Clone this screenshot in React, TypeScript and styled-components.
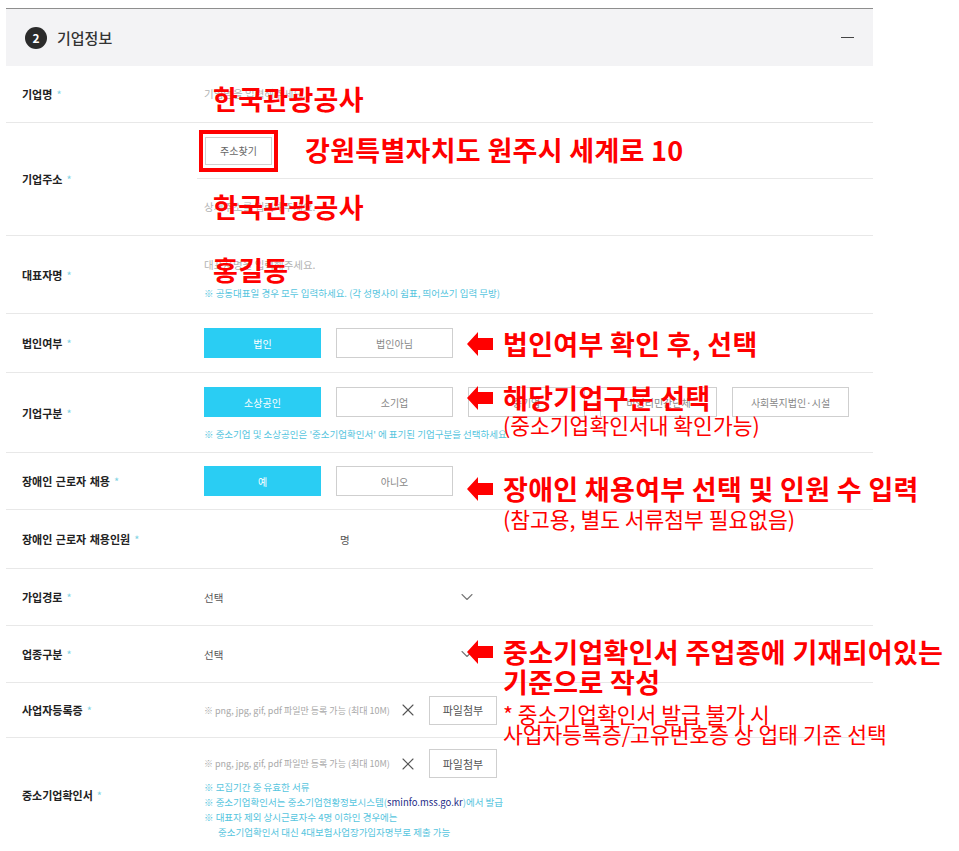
import styled, { createGlobalStyle } from 'styled-components'
import { ChevronDown, X } from 'lucide-react'

const GlobalStyle = createGlobalStyle`
  * { box-sizing: border-box; }
  body {
    margin: 0;
    background: #fff;
    font-family: 'Noto Sans CJK KR', 'Noto Sans', sans-serif;
  }
`

const Arrow = () => (
  <svg width='26' height='24' viewBox='0 0 26 24'>
    <polygon points='0,12 11,0 11,6 26,6 26,18 11,18 11,24' fill='#ff0000' />
  </svg>
)

export default function App() {
  return (
    <>
      <GlobalStyle />
      <Panel>
        <Header>
          <HeaderTitle>
            <Badge>2</Badge>
            <Title>기업정보</Title>
          </HeaderTitle>
          <Minus />
        </Header>

        <Row $h={57}>
          <Label>
            기업명<Req>*</Req>
          </Label>
          <Value>
            <Placeholder>기업명을 입력해주세요.</Placeholder>
          </Value>
          <Note $x={207} $y={18}>
            <Lines>
              <Big>한국관광공사</Big>
            </Lines>
          </Note>
        </Row>

        <Row $h={113}>
          <Label>
            기업주소<Req>*</Req>
          </Label>
          <AddrValue>
            <AddrSub $line>
              <RedFrame>
                <SmallBtn>주소찾기</SmallBtn>
              </RedFrame>
            </AddrSub>
            <AddrSub>
              <Placeholder>상세주소를 입력해주세요.</Placeholder>
            </AddrSub>
          </AddrValue>
          <Note $x={299} $y={12}>
            <Lines>
              <Big>강원특별자치도 원주시 세계로 10</Big>
            </Lines>
          </Note>
          <Note $x={207} $y={69}>
            <Lines>
              <Big>한국관광공사</Big>
            </Lines>
          </Note>
        </Row>

        <Row $h={78}>
          <Label>
            대표자명<Req>*</Req>
          </Label>
          <Value $pt={21} $gap={13}>
            <Placeholder>대표자명을 입력해주세요.</Placeholder>
            <Help>※ 공동대표일 경우 모두 입력하세요. (각 성명사이 쉼표, 띄어쓰기 입력 무방)</Help>
          </Value>
          <Note $x={207} $y={19}>
            <Lines>
              <Big>홍길동</Big>
            </Lines>
          </Note>
        </Row>

        <Row $h={59}>
          <Label>
            법인여부<Req>*</Req>
          </Label>
          <Value>
            <Choices>
              <Choice $on>법인</Choice>
              <Choice>법인아님</Choice>
            </Choices>
          </Value>
          <Note $x={461} $y={15}>
            <Arrow />
            <Lines>
              <Big>법인여부 확인 후, 선택</Big>
            </Lines>
          </Note>
        </Row>

        <Row $h={80}>
          <Label>
            기업구분<Req>*</Req>
          </Label>
          <Value $pt={14} $gap={10}>
            <Choices>
              <Choice $on>소상공인</Choice>
              <Choice>소기업</Choice>
              <Choice>중기업</Choice>
              <Choice>비영리민간단체</Choice>
              <Choice>사회복지법인·시설</Choice>
            </Choices>
            <Help>※ 중소기업 및 소상공인은 '중소기업확인서' 에 표기된 기업구분을 선택하세요.</Help>
          </Value>
          <Note $x={461} $y={10}>
            <Arrow />
            <Lines>
              <Big>해당기업구분 선택</Big>
              <Small>(중소기업확인서내 확인가능)</Small>
            </Lines>
          </Note>
        </Row>

        <Row $h={57}>
          <Label>
            장애인 근로자 채용<Req>*</Req>
          </Label>
          <Value>
            <Choices>
              <Choice $on>예</Choice>
              <Choice>아니오</Choice>
            </Choices>
          </Value>
          <Note $x={461} $y={21}>
            <Arrow />
            <Lines>
              <Big>장애인 채용여부 선택 및 인원 수 입력</Big>
              <Small $mt={3}>(참고용, 별도 서류첨부 필요없음)</Small>
            </Lines>
          </Note>
        </Row>

        <Row $h={59}>
          <Label>
            장애인 근로자 채용인원<Req>*</Req>
          </Label>
          <Value $row>
            <CountBox />
            <Unit>명</Unit>
          </Value>
        </Row>

        <Row $h={57}>
          <Label>
            가입경로<Req>*</Req>
          </Label>
          <Value>
            <Select>
              <span>선택</span>
              <ChevronDown size={20} strokeWidth={1.3} color='#777' />
            </Select>
          </Value>
        </Row>

        <Row $h={57}>
          <Label>
            업종구분<Req>*</Req>
          </Label>
          <Value>
            <Select>
              <span>선택</span>
              <ChevronDown size={20} strokeWidth={1.3} color='#777' />
            </Select>
          </Value>
          <Note $x={461} $y={11}>
            <Arrow />
            <Lines>
              <Big>중소기업확인서 주업종에 기재되어있는</Big>
              <Big>기준으로 작성</Big>
              <Small $mt={7} $lh={20}>
                * 중소기업확인서 발급 불가 시
              </Small>
              <Small $lh={20}>사업자등록증/고유번호증 상 업태 기준 선택</Small>
            </Lines>
          </Note>
        </Row>

        <Row $h={55}>
          <Label>
            사업자등록증<Req>*</Req>
          </Label>
          <Value>
            <FileRow>
              <FileHint>※ png, jpg, gif, pdf 파일만 등록 가능 (최대 10M)</FileHint>
              <X size={20} strokeWidth={1.3} color='#555' />
              <AttachBtn>파일첨부</AttachBtn>
            </FileRow>
          </Value>
        </Row>

        <Row $h={114}>
          <Label>
            중소기업확인서<Req>*</Req>
          </Label>
          <Value $pt={11} $gap={2}>
            <FileRow>
              <FileHint>※ png, jpg, gif, pdf 파일만 등록 가능 (최대 10M)</FileHint>
              <X size={20} strokeWidth={1.3} color='#555' />
              <AttachBtn>파일첨부</AttachBtn>
            </FileRow>
            <HelpList>
              <Help>※ 모집기간 중 유효한 서류</Help>
              <Help>
                ※ 중소기업확인서는 중소기업현황정보시스템(<Link>sminfo.mss.go.kr</Link>)에서 발급
              </Help>
              <Help>※ 대표자 제외 상시근로자수 4명 이하인 경우에는</Help>
              <Help $indent>중소기업확인서 대신 4대보험사업장가입자명부로 제출 가능</Help>
            </HelpList>
          </Value>
        </Row>
      </Panel>
    </>
  )
}

const Panel = styled.div`
  width: 867px;
  margin: 8px 0 0 6px;
  border-top: 1px solid #8e8e8e;
`

const Header = styled.div`
  height: 57px;
  background: #f3f3f5;
  display: flex;
  align-items: center;
  justify-content: space-between;
  padding: 0 19px;
`

const HeaderTitle = styled.div`
  display: flex;
  align-items: center;
  gap: 10px;
`

const Badge = styled.span`
  width: 22px;
  height: 22px;
  border-radius: 50%;
  background: #2b2b2b;
  color: #fff;
  font-size: 12px;
  font-weight: 700;
  display: flex;
  align-items: center;
  justify-content: center;
`

const Title = styled.span`
  font-size: 15px;
  font-weight: 500;
  color: #333;
`

const Minus = styled.span`
  width: 13px;
  height: 1px;
  background: #444;
`

const Row = styled.div<{ $h: number }>`
  position: relative;
  display: grid;
  grid-template-columns: 191px 1fr;
  height: ${({ $h }) => $h}px;
  border-bottom: 1px solid #e8e8e8;
`

const Label = styled.div`
  display: flex;
  align-items: center;
  padding-left: 16px;
  font-size: 11px;
  font-weight: 700;
  color: #222;
  word-spacing: 1px;
`

const Req = styled.span`
  margin-left: 4px;
  color: #7fd3e3;
  font-weight: 400;
`

const Value = styled.div<{ $pt?: number; $gap?: number; $row?: boolean }>`
  display: flex;
  flex-direction: ${({ $row }) => ($row ? 'row' : 'column')};
  justify-content: ${({ $pt, $row }) => ($row ? 'flex-start' : $pt !== undefined ? 'flex-start' : 'center')};
  align-items: ${({ $row }) => ($row ? 'center' : 'flex-start')};
  padding-left: 7px;
  padding-top: ${({ $pt }) => $pt ?? 0}px;
  gap: ${({ $gap }) => $gap ?? 0}px;
`

const AddrValue = styled.div`
  display: flex;
  flex-direction: column;
`

const AddrSub = styled.div<{ $line?: boolean }>`
  height: 56px;
  display: flex;
  align-items: center;
  padding-left: 7px;
  border-bottom: ${({ $line }) => ($line ? '1px solid #e8e8e8' : 'none')};
`

const RedFrame = styled.div`
  display: inline-flex;
  margin-left: -5px;
  padding: 3px 2px;
  border: 4px solid #ff0000;
`

const SmallBtn = styled.div`
  width: 67px;
  height: 28px;
  border: 1px solid #d0d0d0;
  display: flex;
  align-items: center;
  justify-content: center;
  font-size: 10px;
  color: #666;
`

const Placeholder = styled.span`
  font-size: 10.5px;
  line-height: 16px;
  color: #b3b3b3;
`

const Help = styled.div<{ $indent?: boolean }>`
  font-size: 9.5px;
  line-height: 15px;
  color: #56c5de;
  padding-left: ${({ $indent }) => ($indent ? 14 : 0)}px;
  white-space: nowrap;
`

const HelpList = styled.div`
  display: flex;
  flex-direction: column;
`

const Link = styled.span`
  color: #1d2a86;
`

const Choices = styled.div`
  display: flex;
  gap: 15px;
`

const Choice = styled.div<{ $on?: boolean }>`
  width: 117px;
  height: 30px;
  display: flex;
  align-items: center;
  justify-content: center;
  font-size: 10px;
  border: 1px solid ${({ $on }) => ($on ? '#2acdf3' : '#cfcfcf')};
  background: ${({ $on }) => ($on ? '#2acdf3' : '#fff')};
  color: ${({ $on }) => ($on ? '#fff' : '#888')};
`

const CountBox = styled.div`
  width: 130px;
  height: 28px;
`

const Unit = styled.span`
  margin-left: 6px;
  font-size: 10.5px;
  color: #555;
`

const Select = styled.div`
  width: 273px;
  display: flex;
  align-items: center;
  justify-content: space-between;
  font-size: 10.5px;
  color: #555;
`

const FileRow = styled.div`
  display: flex;
  align-items: center;
`

const FileHint = styled.span`
  width: 194px;
  font-size: 9px;
  color: #a8a8a8;
  white-space: nowrap;
`

const AttachBtn = styled.div`
  margin-left: 11px;
  width: 68px;
  height: 29px;
  border: 1px solid #cfcfcf;
  display: flex;
  align-items: center;
  justify-content: center;
  font-size: 11px;
  color: #555;
`

const Note = styled.div<{ $x: number; $y: number }>`
  position: absolute;
  left: ${({ $x }) => $x}px;
  top: ${({ $y }) => $y}px;
  z-index: 2;
  display: flex;
  align-items: flex-start;
  gap: 10px;
  color: #ff0000;
  white-space: nowrap;
  pointer-events: none;

  svg {
    margin-top: 3px;
    flex-shrink: 0;
  }
`

const Lines = styled.div`
  display: flex;
  flex-direction: column;
`

const Big = styled.div`
  font-size: 27px;
  line-height: 30px;
  font-weight: 700;
  letter-spacing: 0.3px;
`

const Small = styled.div<{ $mt?: number; $lh?: number }>`
  margin-top: ${({ $mt }) => $mt ?? 0}px;
  font-size: 21.5px;
  line-height: ${({ $lh }) => $lh ?? 24}px;
  font-weight: 400;
`
